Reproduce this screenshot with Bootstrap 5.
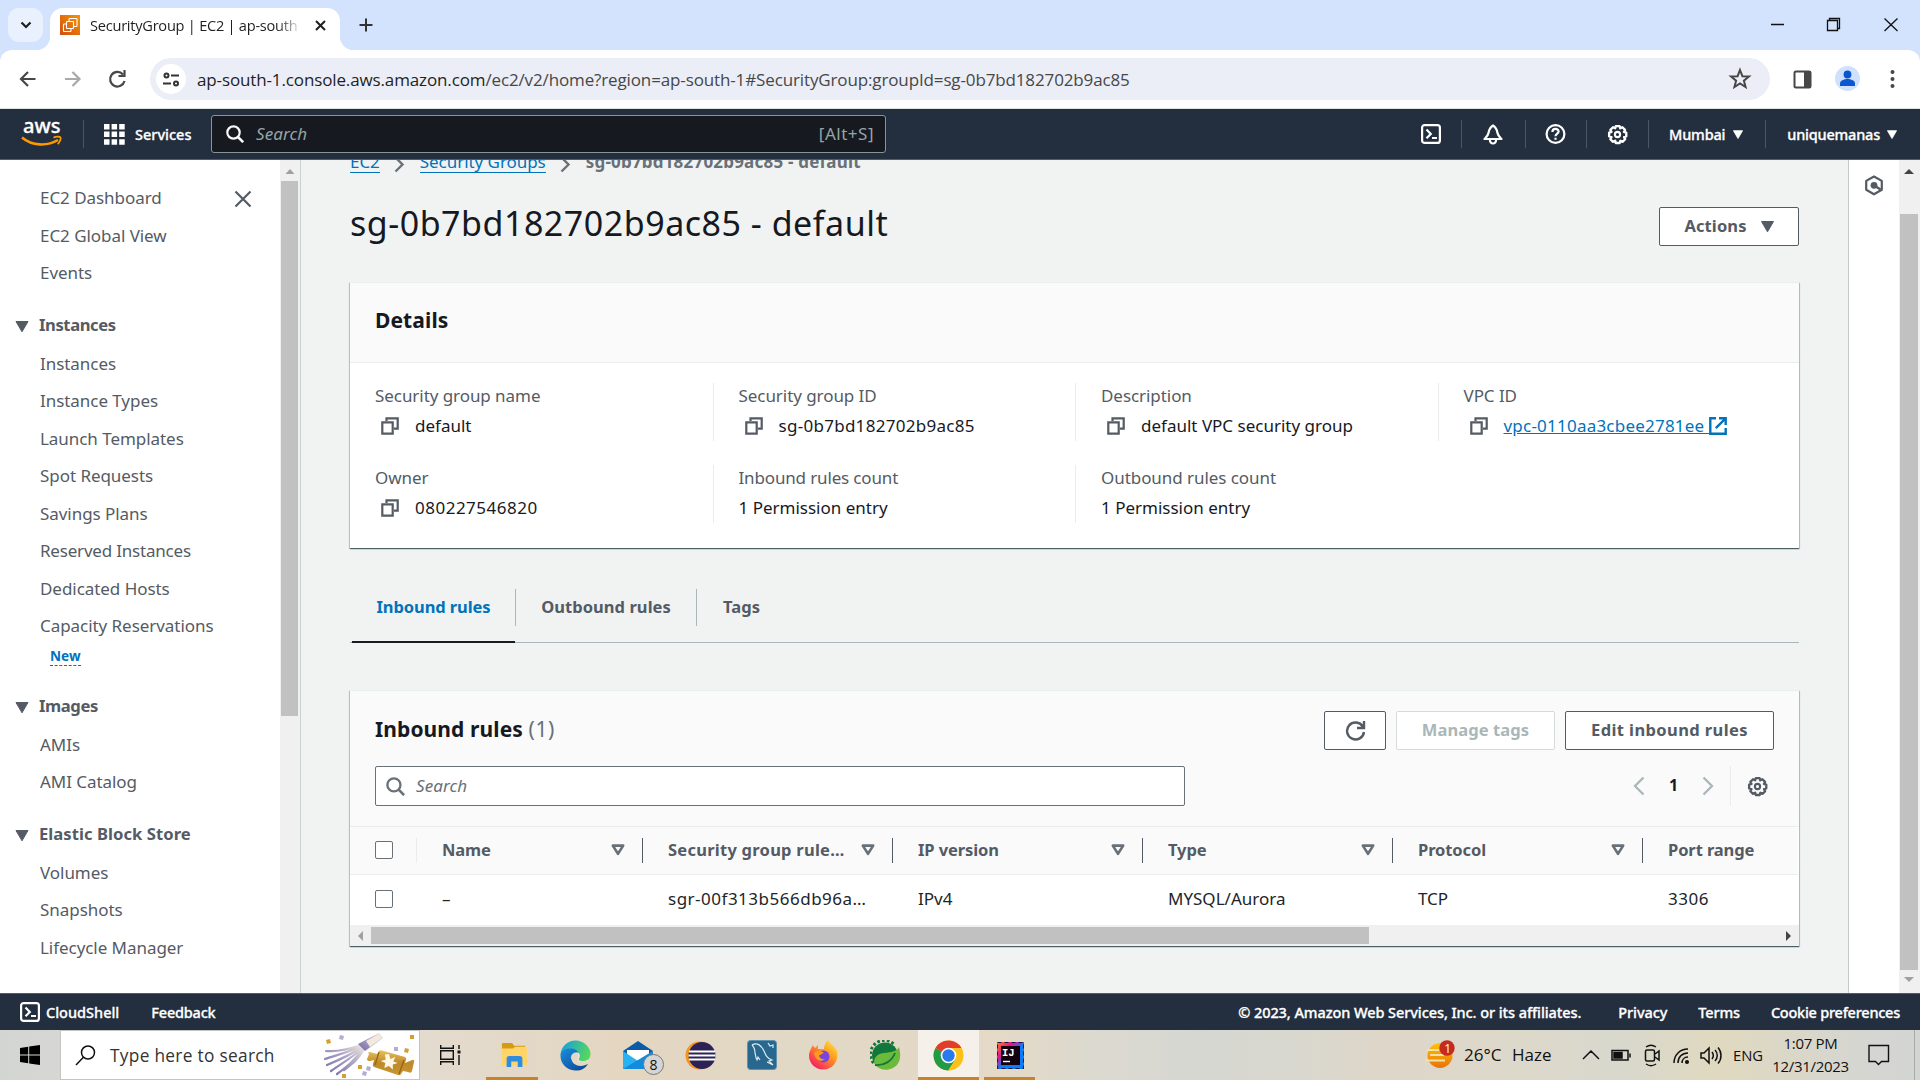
<!DOCTYPE html>
<html lang="en">
<head>
<meta charset="utf-8">
<title>SecurityGroup | EC2 | ap-south-1</title>
<meta name="viewport" content="width=device-width, initial-scale=1">
<link href="https://cdn.jsdelivr.net/npm/bootstrap@5.3.0/dist/css/bootstrap.min.css" rel="stylesheet">
<style>
  :root { --ink:#16191f; --muted:#545b64; --link:#0073bb; --squid:#232f3e; --line:#eaeded; }
  body { font-family:"Noto Sans","Open Sans",sans-serif; font-size:17px; line-height:24px; color:var(--ink); height:1080px; overflow:hidden; background:#f1f3f3; }
  svg { display:block; flex:none; }
  .sys { font-family:"Open Sans","Noto Sans",sans-serif; }
  .wide { letter-spacing:.28px; }
  .wider { letter-spacing:.5px; }

  /* browser chrome */
  .tabstrip { height:50px; background:#d3e3fd; }
  .tab-search { width:35px; height:34px; border-radius:11px; background:#e9f1fe; margin:8px 7px 8px 8px; }
  .page-tab { width:290px; height:42px; margin-top:8px; background:#fff; border-radius:13px 13px 0 0; padding:0 14px 8px 10px; position:relative; }
  .page-tab::before, .page-tab::after { content:""; position:absolute; bottom:0; width:14px; height:14px; }
  .page-tab::before { left:-14px; background:radial-gradient(circle at 0 0, transparent 14px, #fff 14.5px); }
  .page-tab::after { right:-14px; background:radial-gradient(circle at 100% 0, transparent 14px, #fff 14.5px); }
  .tab-title { font-size:14.6px; letter-spacing:-.25px; width:208px; margin-left:10px; color:#1f1f1f; -webkit-mask-image:linear-gradient(90deg,#000 90%,transparent 102%); mask-image:linear-gradient(90deg,#000 90%,transparent 102%); }
  .toolbar-wrap { background:#d3e3fd; }
  .toolbar { height:59px; background:#fff; border-radius:12px 12px 0 0; border-bottom:1px solid #dce3e0; }
  .omnibox { width:1620px; height:42px; border-radius:21px; background:#ebeef7; }
  .site-chip { width:30px; height:30px; border-radius:50%; background:#fff; margin:0 11px 0 -2px; }
  .url-text { font-size:17px; color:#474747; letter-spacing:-.13px; padding-top:2px; }
  .url-text b { font-weight:400; color:#1f1f1f; }

  /* console header */
  .console-nav { height:51px; background:var(--squid); border-bottom:1px solid #545b64; color:#fff; font-size:15px; padding:0; }
  .vrule { width:1px; height:28px; background:#4b5663; }
  .nav-search { width:675px; height:38px; background:#16191f; border:1px solid #879596; border-radius:3px; color:#95a5a6; font-size:17px; }
  .semi { font-weight:500; -webkit-text-stroke:.3px currentColor; }

  /* page body */
  .console-body { height:833px; overflow:hidden; }
  .side { width:280px; background:#fff; padding:19px 0 0 40px; color:var(--muted); overflow:hidden; }
  .side .nav-link { height:37.5px; line-height:38px; padding:0; color:var(--muted); white-space:nowrap; letter-spacing:-.05px; }
  .side-head { height:53px; padding-top:14px; margin-left:-25px; font-weight:700; font-size:16.6px; letter-spacing:-.4px; }
  .side-head svg { margin:2px 10px 0 0; }
  .new-flag { height:28px; padding-left:10px; line-height:19px; }
  .new-flag span { display:inline-block; color:var(--link); font-weight:700; font-size:13.6px; border-bottom:1px dashed var(--link); }
  .vbar { width:21px; background:#f0f0f0; border-right:1px solid #ccd1d1; padding:0 2px 0 1px; }
  .vthumb { background:#c1c1c1; }
  .main-pane { width:1548px; padding:0 49px; overflow:hidden; border-right:1px solid #c5cbcb; }
  .trail { height:23px; margin-top:-10px; font-size:17px; line-height:23px; letter-spacing:-.05px; }
  .trail a { color:var(--link); text-decoration:none; border-bottom:1px solid var(--link); line-height:21px; }
  .trail svg { margin:6px 15px 0 14px; }
  .page-title { font-size:34px; line-height:42px; font-weight:400; margin:-1px 0 0; letter-spacing:.52px; }
  .btn-aws { --bs-btn-bg:#fff; --bs-btn-border-color:#545b64; --bs-btn-color:#545b64; --bs-btn-font-weight:700; --bs-btn-border-radius:2px; --bs-btn-disabled-bg:#fff; --bs-btn-disabled-color:#aab7b8; --bs-btn-disabled-border-color:#d5dbdb; --bs-btn-disabled-opacity:1; height:39px; padding:0; font-size:16.5px; letter-spacing:.1px; display:inline-flex; align-items:center; justify-content:center; }
  .panel { border:0; border-radius:0; box-shadow:0 1px 1px 0 rgba(0,28,36,.55),1px 1px 1px 0 rgba(0,28,36,.18),-1px 1px 1px 0 rgba(0,28,36,.15); border-top:1px solid var(--line); }
  .panel .card-header { background:#fafafa; border-bottom:1px solid var(--line); border-radius:0; padding:0 25px; }
  .panel-title { font-size:21px; font-weight:700; letter-spacing:.1px; margin:0; line-height:30px; }
  .fact { width:362.5px; height:58px; border-left:1px solid var(--line); padding-left:25px; }
  .fact:first-child { border-left:0; width:362.5px; }
  .fact-label { color:var(--muted); line-height:25px; letter-spacing:-.06px; }
  .fact-value { line-height:24px; margin-top:6px; }
  .copy-ico { color:var(--muted); margin:0 16px 0 6px; }
  .fact a { color:var(--link); }
  .rule-tabs { border-bottom:1px solid #aab7b8; height:62px; margin-top:33px; }
  .rule-tabs .nav-link { border:0; border-radius:0; color:var(--muted); font-weight:700; font-size:16.5px; letter-spacing:.05px; padding:0; height:61px; line-height:51px; background:none; }
  .rule-tabs .nav-link.active { color:var(--link); border-bottom:2px solid #16191f; background:none; height:62px; letter-spacing:-.1px; }
  .tab-rule { width:1px; height:37px; background:#aab7b8; margin-top:8px; }
  .find-box { width:810px; height:40px; background:#fff; border:1px solid #687078; border-radius:2px; color:#687078; }
  .grid-table { table-layout:fixed; width:1448px; margin:0; }
  .grid-table th, .grid-table td { padding:0; border-bottom:1px solid var(--line); vertical-align:middle; }
  .grid-table th { background:#fafafa; color:var(--muted); font-size:16.5px; letter-spacing:-.1px; height:48px; }
  .grid-table td { height:50px; border-bottom:0; padding-bottom:1px; }
  .cell { height:25px; padding:0 17px 0 25px; border-right:1px solid #545b64; display:flex; justify-content:space-between; align-items:center; white-space:nowrap; }
  .form-check-input[type=checkbox].check { width:18px; height:18px; border:1px solid #687078; border-radius:2px; background:#fff; margin:0 0 0 25px; display:block; float:none; }
  .hbar { height:22px; background:#f0f0f0; }
  .hthumb { width:998px; height:17px; background:#c1c1c1; }
  .aside-rail { width:50px; background:#fff; color:var(--muted); padding:15px 0 0 15px; }

  .console-foot { height:37px; background:var(--squid); border-top:1px solid #545b64; color:#fff; font-size:14.5px; }

  /* desktop taskbar */
  .taskbar { height:50px; background:linear-gradient(90deg,#d3d5d3 0,#dcdcd4 200px,#e3dbcf 420px,#e4d6c1 620px,#e1d8c5 800px,#e5d9c7 1000px,#dcd9cf 1090px,#d6d7d2 1200px,#d9d8cf 1290px,#ded6c9 1380px,#ddd8ca 1500px,#d9d8cd 1620px,#e0d9bf 1720px,#d6d6d0 1850px,#d3d5d4 1920px); color:#111; }
  .start-cell { width:60px; }
  .desk-find { width:360px; height:50px; background:#fff; border:1px solid #c4c4c2; }
  .task { width:62px; height:50px; position:relative; display:flex; align-items:center; justify-content:center; }
  .task.nudge { padding-left:3px; }
  .task.open::after { content:""; position:absolute; left:5px; right:6px; bottom:0; height:3px; background:#c9822b; }
  .task.current { background:#f5f0e9; }
  .task.current::after { left:0; right:0; }
  .mail-count { position:absolute; left:39px; top:24px; width:21px; height:21px; border-radius:50%; border:1px solid #777; background:#d5d5d3; font-size:14px; line-height:19px; text-align:center; }
  .tray { font-size:16px; }
  .clock { font-size:15px; line-height:23.5px; letter-spacing:-.3px; padding-left:1px; }
</style>
<script src="https://cdn.jsdelivr.net/npm/bootstrap@5.3.0/dist/js/bootstrap.bundle.min.js"></script>
</head>
<body class="d-flex flex-column">
<svg width="0" height="0" class="position-absolute">
  <symbol id="copy" viewBox="0 0 18 18"><path d="M5.500 4V1.300h11.200v10.400H13M1.300 5.300h10.400v11.400H1.300z" fill="none" stroke="currentColor" stroke-width="2.200"/></symbol>
  <symbol id="gear" viewBox="0 0 20 20"><path d="M8.300 1.500h3.400l.6 2 1.900-1 2.400 2.400-1 1.800 2.100.7v3.300l-2 .7 1 1.900-2.400 2.300-1.900-1-.7 2.100H8.300l-.6-2.100-1.900 1-2.400-2.300 1-1.900-2.100-.7V7.400l2.100-.7-1-1.800 2.400-2.400 1.900 1z" transform="translate(-.4 .4) scale(1.060)" fill="none" stroke="currentColor" stroke-width="2.100" stroke-linejoin="round"/><circle cx="10" cy="10" r="2.500" fill="none" stroke="currentColor" stroke-width="2"/></symbol>
  <symbol id="lens" viewBox="0 0 18 18"><circle cx="7.500" cy="7.500" r="6.200" fill="none" stroke="currentColor" stroke-width="2.200"/><path d="M12 12l5.200 5.200" stroke="currentColor" stroke-width="2.500"/></symbol>
  <symbol id="shell" viewBox="0 0 20 20"><rect x="1.100" y="1.100" width="17.800" height="17.800" rx="2.500" fill="none" stroke="currentColor" stroke-width="2.200"/><path d="M5.500 5.500l4.300 4.400-4.300 4.400M11 14h5" fill="none" stroke="currentColor" stroke-width="2.200"/></symbol>
  <symbol id="down" viewBox="0 0 13 11"><path d="M.5.500h12L6.500 10.800z" fill="currentColor" stroke="currentColor" stroke-linejoin="round"/></symbol>
  <symbol id="sort" viewBox="0 0 14 12"><path d="M1.800 1.600h10.400L7 9.800z" fill="none" stroke="#687078" stroke-width="2.600" stroke-linejoin="round"/></symbol>
  <symbol id="crumb" viewBox="0 0 11 17"><path d="M1.500 1.500l7 7-7 7" fill="none" stroke="#687078" stroke-width="2.400"/></symbol>
</svg>

<div class="tabstrip d-flex sys">
  <div class="tab-search d-flex align-items-center justify-content-center"><svg width="12" height="8" viewBox="0 0 12 8"><path d="M1.500 1.500L6 6l4.500-4.500" fill="none" stroke="#1f1f1f" stroke-width="2.200"/></svg></div>
  <div class="page-tab d-flex align-items-center">
    <svg width="20" height="20" viewBox="0 0 20 20"><defs><linearGradient id="og" x1="0" y1="1" x2="1" y2="0"><stop stop-color="#cf4f14"/><stop offset="1" stop-color="#f79400"/></linearGradient></defs><path d="M0 0h20v20H0z" fill="url(#og)"/><g fill="none" stroke="#fff" stroke-width="1.100"><rect x="6.500" y="6.500" width="7" height="7" rx=".8"/><path d="M9 6V4.300q0-.8.800-.8h6.400q.8 0 .8.800v6.400q0 .8-.8.800H14M6 9H4.300q-.8 0-.8.800v5.900q0 .8.800.8h5.900q.8 0 .8-.8V14"/></g></svg>
    <div class="tab-title text-nowrap overflow-hidden">SecurityGroup | EC2 | ap-south-1</div>
    <svg class="ms-auto" width="11" height="11" viewBox="0 0 11 11"><path d="M1 1l9 9M10 1l-9 9" stroke="#1f1f1f" stroke-width="2"/></svg>
  </div>
  <svg class="ms-3" width="20" height="50" viewBox="0 0 20 50"><path d="M10 18.500v13M3.500 25h13" stroke="#333" stroke-width="2"/></svg>
  <div class="ms-auto d-flex" style="margin-right:22px">
    <svg width="127" height="50" viewBox="0 0 127 50" fill="none" stroke="#111" stroke-width="1.300"><path d="M0 24.500h13M56.500 20.500h10v10h-10zM58.500 20.500v-2h10v10h-2M113.500 18.500l13 12.500M126.500 18.500l-13 12.500"/></svg>
  </div>
</div>
<div class="toolbar-wrap sys">
  <div class="toolbar d-flex align-items-center">
    <svg width="150" height="58" viewBox="0 0 150 58" fill="none" stroke="#474747" stroke-width="2.200"><path d="M35.500 29H21M28 22l-7 7 7 7"/><path d="M65 29h14.500M72.500 22l7 7-7 7" stroke="#a9a9a9"/><path d="M123 24.500a7.300 7.300 0 1 0 1.500 6.500M124.500 20v6h-6"/></svg>
    <div class="omnibox d-flex align-items-center px-2">
      <div class="site-chip d-flex align-items-center justify-content-center"><svg width="17" height="15" viewBox="0 0 17 15" fill="none" stroke="#333" stroke-width="2"><circle cx="3.500" cy="3.500" r="2"/><path d="M8 3.500h8M0 11.500h8"/><circle cx="13" cy="11.500" r="2"/></svg></div>
      <div class="url-text"><b>ap-south-1.console.aws.amazon.com</b>/ec2/v2/home?region=ap-south-1#SecurityGroup:groupId=sg-0b7bd182702b9ac85</div>
      <svg class="ms-auto me-2" width="28" height="24" viewBox="0 0 28 24"><path d="M14 3l2.400 6.200 6.600.3-5.100 4.200 1.700 6.300L14 16.400 8.400 20l1.700-6.300L5 9.500l6.600-.3z" fill="none" stroke="#474747" stroke-width="2"/></svg>
    </div>
    <svg width="150" height="58" viewBox="0 0 150 58"><rect x="24.500" y="21.500" width="16" height="16" rx="1.500" fill="none" stroke="#474747" stroke-width="2"/><path d="M34 21h7v17h-7z" fill="#474747"/><circle cx="77.500" cy="28.500" r="12.500" fill="#cfe1fd"/><circle cx="77.500" cy="24.500" r="3.900" fill="#0b57d0"/><path d="M70 36v-2.500c0-3 4-4.500 7.500-4.500s7.500 1.500 7.500 4.500V36z" fill="#0b57d0"/><g fill="#474747"><circle cx="122.500" cy="22" r="2"/><circle cx="122.500" cy="29" r="2"/><circle cx="122.500" cy="36" r="2"/></g></svg>
  </div>
</div>

<nav class="navbar console-nav flex-nowrap justify-content-start">
  <svg width="83" height="50" viewBox="0 0 83 50"><text x="23" y="24" font-family="Noto Sans" font-size="19.500" font-weight="500" fill="#fff" stroke="#fff" stroke-width=".3" textLength="37.500" lengthAdjust="spacingAndGlyphs">aws</text><path d="M22 28.500c10 8.500 25 9 36 2.500" fill="none" stroke="#f90" stroke-width="2.600"/><path d="M53.500 28.600c3-1.300 6.300-1 7-.2.600 1-.3 4.500-2.800 6.800" fill="none" stroke="#f90" stroke-width="1.700"/></svg>
  <div class="vrule"></div>
  <svg style="margin-left:20px" width="21" height="21" viewBox="0 0 21 21" fill="#fff"><path d="M0 0h5.500v5.500H0zM7.600 0h5.500v5.500H7.600zM15.200 0h5.500v5.500h-5.500zM0 7.600h5.500v5.500H0zM7.600 7.600h5.500v5.500H7.600zM15.200 7.600h5.500v5.500h-5.500zM0 15.200h5.500v5.500H0zM7.600 15.200h5.500v5.500H7.600zM15.200 15.200h5.500v5.500h-5.500z"/></svg>
  <div class="semi" style="width:86px;padding-left:10px;font-size:14.500px">Services</div>
  <div class="nav-search d-flex align-items-center" style="padding:0 11px 0 14px"><svg class="text-light" width="18" height="18"><use href="#lens"/></svg><span class="fst-italic" style="margin-left:12px;letter-spacing:.1px">Search</span><span class="ms-auto wider">[Alt+S]</span></div>
  <div class="ms-auto d-flex align-items-center text-nowrap semi" style="font-size:14.500px;letter-spacing:-.2px">
    <svg width="20" height="20"><use href="#shell"/></svg><div class="vrule" style="margin:0 21px 0 20px"></div>
    <svg width="20" height="21" viewBox="0 0 20 21" fill="none" stroke="#fff" stroke-width="2.200"><path d="M10 1.500c-3.200 2-4 4-4.500 7.500-.4 2.500-1.500 3.500-4 6h17c-2.500-2.500-3.600-3.500-4-6-.5-3.500-1.300-5.500-4.500-7.500zM6.800 15.500c.2 2.500 1.500 4 3.200 4s3-1.500 3.200-4" stroke-linejoin="round"/></svg><div class="vrule" style="margin:0 19px 0 22px"></div>
    <svg width="21" height="20" viewBox="0 0 21 20" fill="none" stroke="#fff" stroke-width="2.200"><circle cx="10.500" cy="10" r="8.900"/><path d="M7.400 8c0-4 6.200-4 6.200-.4 0 2-3.100 2.200-3.100 4.700M10.500 13.700v2"/></svg><div class="vrule" style="margin:0 19.500px 0 20px"></div>
    <svg width="21" height="21"><use href="#gear"/></svg><div class="vrule" style="margin:0 20.500px 0 20px"></div>
    <span>Mumbai</span><svg class="ms-2" width="10" height="9"><use href="#down"/></svg><div class="vrule" style="margin:0 21px 0 22px"></div>
    <span>uniquemanas</span><svg style="margin:0 23px 0 7px" width="10" height="9"><use href="#down"/></svg>
  </div>
</nav>

<div class="console-body d-flex">
  <aside class="side">
    <nav class="nav flex-column flex-nowrap">
      <div class="d-flex justify-content-between align-items-center"><a class="nav-link">EC2 Dashboard</a><svg style="margin:2px 28px 0 0" width="18" height="18" viewBox="0 0 18 18"><path d="M1.500 1.500l15 15M16.500 1.500l-15 15" stroke="#545b64" stroke-width="2.200"/></svg></div>
      <a class="nav-link">EC2 Global View</a>
      <a class="nav-link">Events</a>
      <div class="side-head d-flex align-items-center"><svg width="14" height="11"><use href="#down"/></svg>Instances</div>
      <a class="nav-link">Instances</a>
      <a class="nav-link">Instance Types</a>
      <a class="nav-link">Launch Templates</a>
      <a class="nav-link">Spot Requests</a>
      <a class="nav-link">Savings Plans</a>
      <a class="nav-link" style="letter-spacing:-.2px">Reserved Instances</a>
      <a class="nav-link">Dedicated Hosts</a>
      <a class="nav-link">Capacity Reservations</a>
      <div class="new-flag"><span>New</span></div>
      <div class="side-head d-flex align-items-center"><svg width="14" height="11"><use href="#down"/></svg>Images</div>
      <a class="nav-link">AMIs</a>
      <a class="nav-link">AMI Catalog</a>
      <div class="side-head d-flex align-items-center" style="letter-spacing:.05px"><svg width="14" height="11"><use href="#down"/></svg>Elastic Block Store</div>
      <a class="nav-link">Volumes</a>
      <a class="nav-link">Snapshots</a>
      <a class="nav-link">Lifecycle Manager</a>
      <div class="side-head d-flex align-items-center"><svg width="14" height="11"><use href="#down"/></svg>Network &amp; Security</div>
    </nav>
  </aside>
  <div class="vbar"><svg width="18" height="21" viewBox="0 0 18 21"><path d="M9 9l4.500 5h-9z" fill="#a0a0a0"/></svg><div class="vthumb" style="height:535px"></div></div>

  <main class="main-pane">
    <div class="trail d-flex align-items-center">
      <a href="#">EC2</a><svg width="11" height="17"><use href="#crumb"/></svg>
      <a href="#">Security Groups</a><svg width="11" height="17"><use href="#crumb"/></svg>
      <span class="fw-bold" style="color:#687078;letter-spacing:.2px">sg-0b7bd182702b9ac85 - default</span>
    </div>
    <div class="d-flex justify-content-between align-items-start" style="margin-top:30px">
      <h1 class="page-title">sg-0b7bd182702b9ac85 - default</h1>
      <button class="btn btn-aws" style="width:140px;margin-top:4px">Actions<svg style="margin-left:14px" width="13" height="11"><use href="#down"/></svg></button>
    </div>

    <section class="card panel" style="height:266px;margin-top:36px">
      <div class="card-header d-flex align-items-center" style="height:80px;padding-bottom:6px"><h2 class="panel-title">Details</h2></div>
      <div class="card-body p-0" style="padding-top:20px!important">
        <div class="d-flex">
          <div class="fact"><div class="fact-label">Security group name</div><div class="fact-value d-flex align-items-center"><svg class="copy-ico" width="18" height="18"><use href="#copy"/></svg>default</div></div>
          <div class="fact"><div class="fact-label">Security group ID</div><div class="fact-value d-flex align-items-center wide"><svg class="copy-ico" width="18" height="18"><use href="#copy"/></svg>sg-0b7bd182702b9ac85</div></div>
          <div class="fact"><div class="fact-label">Description</div><div class="fact-value d-flex align-items-center"><svg class="copy-ico" width="18" height="18"><use href="#copy"/></svg>default VPC security group</div></div>
          <div class="fact" style="width:360px"><div class="fact-label">VPC ID</div><div class="fact-value d-flex align-items-center" style="letter-spacing:.22px"><svg class="copy-ico" width="18" height="18"><use href="#copy"/></svg><a href="#" class="d-flex align-items-center"><span style="white-space:pre">vpc-0110aa3cbee2781ee </span><svg width="18" height="18" viewBox="0 0 18 18" fill="none" stroke="currentColor" stroke-width="2.400"><path d="M7 1.300H1.300v15.400h15.400V11M10 1.300h6.700V8M16.500 1.500l-9.700 9.700"/></svg></a></div></div>
        </div>
        <div class="d-flex" style="margin-top:24px">
          <div class="fact"><div class="fact-label">Owner</div><div class="fact-value d-flex align-items-center wider"><svg class="copy-ico" width="18" height="18"><use href="#copy"/></svg>080227546820</div></div>
          <div class="fact"><div class="fact-label" style="letter-spacing:-.15px">Inbound rules count</div><div class="fact-value">1 Permission entry</div></div>
          <div class="fact"><div class="fact-label">Outbound rules count</div><div class="fact-value">1 Permission entry</div></div>
        </div>
      </div>
    </section>

    <ul class="nav nav-tabs rule-tabs flex-nowrap">
      <li class="nav-item" style="padding-left:2px"><a class="nav-link active text-center" style="width:163px">Inbound rules</a></li>
      <li class="tab-rule"></li>
      <li class="nav-item"><a class="nav-link text-center" style="width:180px">Outbound rules</a></li>
      <li class="tab-rule"></li>
      <li class="nav-item"><a class="nav-link" style="padding-left:26px">Tags</a></li>
    </ul>

    <section class="card panel" style="height:256px;margin-top:47px">
      <div class="card-header" style="height:136px;padding-top:20px">
        <div class="d-flex align-items-center">
          <h2 class="panel-title me-auto" style="padding-bottom:4px">Inbound rules <span class="fw-normal" style="color:#687078;letter-spacing:.6px">(1)</span></h2>
          <button class="btn btn-aws" style="width:62px"><svg width="21" height="21" viewBox="0 0 21 21" fill="none" stroke="currentColor" stroke-width="2.400"><path d="M17.800 6.500A8.500 8.500 0 1 0 19 12M19 1v7h-7"/></svg></button>
          <button class="btn btn-aws" disabled style="width:159px;margin:0 10px">Manage tags</button>
          <button class="btn btn-aws" style="width:209px;letter-spacing:.4px">Edit inbound rules</button>
        </div>
        <div class="d-flex align-items-center" style="margin-top:16px">
          <div class="find-box d-flex align-items-center" style="padding-left:10px"><svg width="19" height="19"><use href="#lens"/></svg><span class="fst-italic" style="margin-left:11px;letter-spacing:.1px">Search</span></div>
          <svg class="ms-auto" width="12" height="20" viewBox="0 0 12 20"><path d="M10.500 1.500L2 10l8.500 8.500" fill="none" stroke="#aab7b8" stroke-width="2.300"/></svg>
          <span class="fw-bold text-center" style="width:57px;font-size:16px;padding-bottom:2px">1</span>
          <svg width="12" height="20" viewBox="0 0 12 20"><path d="M1.500 1.500L10 10l-8.500 8.500" fill="none" stroke="#aab7b8" stroke-width="2.300"/></svg>
          <div style="width:1px;height:40px;background:#eaeded;margin:0 16px"></div>
          <svg style="color:#545b64;margin-right:6px" width="21" height="21"><use href="#gear"/></svg>
        </div>
      </div>
      <div class="overflow-hidden">
        <table class="table grid-table">
          <colgroup><col style="width:67px"><col style="width:226px"><col style="width:250px"><col style="width:250px"><col style="width:250px"><col style="width:250px"><col></colgroup>
          <thead><tr>
            <th><div class="cell p-0" style="border-color:#eaeded"><input type="checkbox" class="form-check-input check"></div></th>
            <th><div class="cell">Name<svg width="14" height="12"><use href="#sort"/></svg></div></th>
            <th><div class="cell" style="letter-spacing:.25px">Security group rule…<svg width="14" height="12"><use href="#sort"/></svg></div></th>
            <th><div class="cell">IP version<svg width="14" height="12"><use href="#sort"/></svg></div></th>
            <th><div class="cell">Type<svg width="14" height="12"><use href="#sort"/></svg></div></th>
            <th><div class="cell">Protocol<svg width="14" height="12"><use href="#sort"/></svg></div></th>
            <th><div class="cell border-0">Port range</div></th>
          </tr></thead>
          <tbody><tr>
            <td><input type="checkbox" class="form-check-input check"></td>
            <td><div class="cell border-0">–</div></td><td><div class="cell border-0 wider">sgr-00f313b566db96a…</div></td><td><div class="cell border-0">IPv4</div></td><td><div class="cell border-0">MYSQL/Aurora</div></td><td><div class="cell border-0">TCP</div></td><td><div class="cell border-0 wider">3306</div></td>
          </tr></tbody>
        </table>
        <div class="hbar d-flex align-items-center"><svg width="21" height="20" viewBox="0 0 21 20"><path d="M8 10l5-5v10z" fill="#a0a0a0"/></svg><div class="hthumb"></div><svg class="ms-auto" width="21" height="20" viewBox="0 0 21 20"><path d="M13 10L8 5v10z" fill="#444"/></svg></div>
      </div>
    </section>
  </main>

  <div class="aside-rail"><svg width="20" height="21" viewBox="0 0 20 21"><path d="M10 1.500l7.800 4.400v8.900L10 19.300l-7.800-4.500V5.900z" fill="none" stroke="currentColor" stroke-width="2.200" stroke-linejoin="round"/><circle cx="10" cy="10.300" r="3.400" fill="currentColor"/><path d="M11 11l5.500 3.500" stroke="currentColor" stroke-width="2.400"/></svg></div>
  <div class="vbar border-0 flex-grow-1 d-flex flex-column"><svg width="18" height="54" viewBox="0 0 18 54"><path d="M9 9l5 5H4z" fill="#444"/></svg><div class="vthumb" style="height:756px"></div><svg class="mt-1" width="18" height="14" viewBox="0 0 18 14"><path d="M9 8L4 3h10z" fill="#a0a0a0"/></svg></div>
</div>

<footer class="console-foot d-flex align-items-center semi text-nowrap">
  <svg style="margin:0 6px 0 20px" width="20" height="20"><use href="#shell"/></svg><span>CloudShell</span><span style="margin-left:32px;letter-spacing:-.2px">Feedback</span>
  <span class="ms-auto" style="letter-spacing:-.08px">© 2023, Amazon Web Services, Inc. or its affiliates.</span><span style="margin-left:37px;letter-spacing:-.1px">Privacy</span><span style="margin-left:31px;letter-spacing:-.15px">Terms</span><span style="margin:0 20px 0 31px;letter-spacing:-.24px">Cookie preferences</span>
</footer>

<div class="taskbar sys d-flex">
  <div class="start-cell d-flex align-items-center ps-1"><svg style="margin-left:16px" width="20" height="20" viewBox="0 0 20 20"><path d="M0 2.900l8.200-1.200v7.800H0zM9.200 1.500L20 0v9.500H9.200zM0 10.500h8.200v7.800L0 17.100zM9.200 10.500H20V20L9.200 18.500z"/></svg></div>
  <div class="desk-find d-flex align-items-center" style="padding-left:14px">
    <svg width="21" height="21" viewBox="0 0 21 21" fill="none" stroke="#111" stroke-width="1.500"><circle cx="13" cy="7.500" r="6.500"/><path d="M8.400 12.200L1 20"/></svg>
    <span style="font-size:17.300px;margin-left:14px;color:#333;letter-spacing:.3px;padding-top:1px">Type here to search</span>
    <svg class="ms-auto me-1" width="92" height="46" viewBox="0 0 92 46"><defs><linearGradient id="lil" x1="0" y1="1" x2="1" y2="0"><stop stop-color="#7467a4"/><stop offset=".55" stop-color="#aaa2c6"/><stop offset="1" stop-color="#f4ebdd"/></linearGradient><linearGradient id="gold" x2="0" y2="1"><stop stop-color="#e8c35b"/><stop offset=".5" stop-color="#bd892b"/><stop offset="1" stop-color="#c9962f"/></linearGradient></defs>
      <g fill="none" stroke="url(#lil)" stroke-width="2.200" stroke-linecap="round"><path d="M38 13C24 18 14 20 3 19M39 14C26 20 14 23 2 27M39 15C28 23 16 28 4 33M40 16C30 25 19 31 8 39M40 16C32 28 25 34 14 42M41 17C35 28 29 32 21 38"/></g>
      <path d="M35 12L56 1l4 5-18 13z" fill="url(#lil)"/><path d="M43 9l13-7 3 4-12 9z" fill="#f3eadb"/>
      <path d="M46 22q-2-2 1-2l7 2 2-3q1-1 3-.5l23 6.500q2 1 1 3l-1 3 7-3q3-1 2 2l-2 9q-1 3-4 1l-5-1-2 3q-1 2-3 1l-24-8q-2-1-1-3l1-4-4 1q-3 0-3-2z" fill="url(#gold)"/><path d="M81 28l-5 14M56 20l-4 13" stroke="#966319" stroke-width="1.300"/>
      <path d="M66 22l1.300 5 5-2-2 4.500 4.500 1.500-5 1.500v5l-4-3.500-4.500 2 1-5-4.500-2 5-1.500-1-5z" fill="#fff7e6"/>
      <g fill="#d5a032"><path d="M3 8l4-1 1 4-4 1zM87 3l4 0 0 4-4 0zM82 16l4 1-1 4-4-1zM35 33l4 0 0 4-4 0zM19 42l4 0 0 4-4 0z"/></g><g fill="#b5add0"><path d="M17 3l4 1-1 4-4-1zM71 15l4 0 0 4-4 0zM44 34l4 1-1 4-4-1zM40 39l4 1-1 4-4-1z"/></g></svg>
  </div>
  <div class="task" style="width:61px"><svg width="21" height="20" viewBox="0 0 21 20" fill="none" stroke="#111" stroke-width="1.400"><path d="M.7 0v3.300h12.600V0M.7 5.700h12.600v8.600H.7zM.7 20v-3.300h12.600V20M19 0v4M19 10v10"/><path d="M17.500 5.500h3v3h-3z" fill="#111" stroke="none"/></svg></div>
  <div class="task open nudge" style="width:63px"><svg width="27" height="26" viewBox="0 0 29 28"><path d="M1 2q0-1 1-1h10l2 3h12v7H1z" fill="#d69a13"/><path d="M1 7h12l2-2h12q1 0 1 1v19H1z" fill="#ffd469"/><path d="M6 27v-9q0-3 3-3h11q3 0 3 3v9h-5v-6h-7v6z" fill="#2f8de0"/></svg></div>
  <div class="task nudge" style="width:60px"><svg width="31" height="31" viewBox="0 0 31 31"><defs><linearGradient id="ed" y1=".2" y2=".5" x2="1"><stop stop-color="#159ee0"/><stop offset="1" stop-color="#57d85c"/></linearGradient><linearGradient id="ed2" x2="1" y2="1"><stop stop-color="#1b8fde"/><stop offset="1" stop-color="#0b3f91"/></linearGradient></defs><path d="M.5 15C1 6 8 .5 15.500.5 24 .5 30.500 7 30.500 14c0 5-3.500 7.500-7.500 7.500-3 0-5-1.500-4-3 2.500-4-1-8-6-8C7 10.500 2 13 .5 15z" fill="url(#ed)"/><path d="M.5 15C1.500 10 6 8.500 10.500 8.500c4 0 7 2 8 4.500-5-1-8 2-7 6.500 1 5 7 8 14 5.500l2.500-1C25 29 20 31 15 30.500 6 30 0 23 .5 15z" fill="url(#ed2)"/><path d="M11.500 19c-1-4 2-7 6-6.200 2 2 2 4 .8 6-.6 1.600 1.700 2.700 4.200 2.700 2 0 4-.5 5.500-1.500" fill="none" stroke="#fff" stroke-opacity=".6" stroke-width=".8"/></svg></div>
  <div class="task nudge" style="width:64px"><svg width="30" height="29" viewBox="0 0 30 29"><path d="M0 10L15 0l15 10v18H0z" fill="#0b5ca8"/><path d="M4 9h22v12H4z" fill="#fff"/><path d="M0 10l15 10L30 10v18H0z" fill="#2ab1f2"/><path d="M0 28l30-18v18z" fill="#128bdc"/></svg><span class="mail-count">8</span></div>
  <div class="task nudge" style="width:61px"><svg width="31" height="29" viewBox="0 0 31 29"><circle cx="14.500" cy="14.500" r="14" fill="#f7941e"/><circle cx="17" cy="14.500" r="13.500" fill="#2c2255"/><path d="M4 10.500h26M3.500 14.500h27M4 18.500h26" stroke="#fff" stroke-width="1.800"/></svg></div>
  <div class="task nudge" style="width:62px"><svg width="30" height="30" viewBox="0 0 30 30"><rect x=".5" y=".5" width="29" height="29" rx="3" fill="#28688e" stroke="#5d91ae"/><path d="M5 5c5-3 9 0 12 6 2 5 3 7 8 9l-3 1 4 4-6-3M5 5c2 2 3 5 3 8 1 2 0 4 2 7l1-3 2 3M21 3l2 3 3-1v3" fill="none" stroke="#dbeaf2" stroke-width="1.200"/></svg></div>
  <div class="task nudge" style="width:62px"><svg width="29" height="30" viewBox="0 0 29 30"><defs><linearGradient id="ff" x1="1" x2=".2" y2="1"><stop stop-color="#fff04a"/><stop offset=".45" stop-color="#ff9a1f"/><stop offset="1" stop-color="#f5136b"/></linearGradient></defs><path d="M19 0c1 3 7 6 9 11 2 10-4 18.500-13.500 18.500C6 29.500 0 23 0 16 0 11 3 8 3.500 5l2.500 3 3-3v4h6c0-4 2-7 4-9z" fill="url(#ff)"/><circle cx="14.500" cy="16.500" r="6" fill="#7a45dd"/><path d="M5 13c4-3 8-2 10 0-2 0-2 2-5 2 0 3 3 5 6 4-4 4-10 1-11-6z" fill="#ff9a1f"/></svg></div>
  <div class="task nudge" style="width:65px;padding-left:0"><svg width="31" height="31" viewBox="0 0 31 31"><circle cx="15" cy="15.500" r="13" fill="#11773c"/><path d="M3.500 23A13.800 13.800 0 0 1 25 5.500" fill="none" stroke="#11773c" stroke-width="3" stroke-dasharray="2.600 2.200"/><path d="M29 7c3 11 0 18-6 21-6 3-13 2-17-2-5-6 1-13 8-13 7-1 12-1 15-6z" fill="#6cba3c"/><path d="M5 25c9 1 17-4 20-12" fill="none" stroke="#11773c" stroke-width="1.800"/></svg></div>
  <div class="task open current" style="width:61px"><svg width="31" height="31" viewBox="0 0 31 31"><circle cx="15.500" cy="15.500" r="15" fill="#fbc116"/><path d="M15.500 15.500L2.500 8A15 15 0 0 1 28.500 8z" fill="#e33b2e"/><path d="M15.500 15.500L2.500 8a15 15 0 0 0 12.800 22.500l7-11z" fill="#229a48"/><path d="M15.500 15.500h14.600A15 15 0 0 1 15.300 30.500l7-11z" fill="#fbc116"/><path d="M15.500 8h13a15 15 0 0 1 1.600 7.500H22z" fill="#fbc116"/><circle cx="15.500" cy="15.500" r="7.800" fill="#fff"/><circle cx="15.500" cy="15.500" r="6.200" fill="#2a79ee"/></svg></div>
  <div class="task open"><svg width="27" height="27" viewBox="0 0 27 27"><defs><linearGradient id="ij" x2="1" y2="1"><stop stop-color="#fc801d"/><stop offset=".3" stop-color="#e5168c"/><stop offset=".55" stop-color="#087cfa"/><stop offset="1" stop-color="#087cfa"/></linearGradient></defs><path d="M0 0h27v27H0z" fill="url(#ij)"/><path d="M.5.500h26v26H.5z" fill="none" stroke="#26153e" stroke-dasharray="4 3"/><path d="M4 4h19v19H4z" fill="#12000e"/><text x="5" y="14" font-family="Liberation Mono" font-weight="700" font-size="10.500" fill="#fff">IJ</text><path d="M6 19.500h7" stroke="#fff" stroke-width="1.400"/></svg></div>

  <div class="tray ms-auto d-flex align-items-center text-nowrap">
    <svg width="30" height="30" viewBox="0 0 30 30"><defs><linearGradient id="sun" x2="0" y2="1"><stop stop-color="#ffc400"/><stop offset="1" stop-color="#e8720c"/></linearGradient></defs><circle cx="15" cy="15.500" r="12.500" fill="url(#sun)"/><path d="M2 10h12M5 15h14M0 20.500h20" stroke="#f3dfa8" stroke-width="2"/><circle cx="22" cy="8" r="7.700" fill="#c42b1c"/><text x="19.300" y="12.500" font-size="12" fill="#fff" font-family="Open Sans">1</text></svg>
    <span style="margin-left:9px;width:48px;font-size:17px">26°C</span><span style="width:63px;font-size:17px">Haze</span>
    <svg style="margin-right:8px" width="150" height="30" viewBox="0 0 150 30" fill="none" stroke="#111" stroke-width="1.500"><path d="M8 19l8-8 8 8M37 10.500h16v9.500H37zM55 13.500v4"/><path d="M39 12.500h8v5.500h-8z" fill="#111"/><rect x="70.500" y="10" width="9" height="11" rx="1.500"/><path d="M80 14l4-3v9l-4-3M71 7c3-2 7-2 10 0M71 24c3 2 7 2 10 0"/><path d="M99 23c0-8 6-14 14-14M103 23c0-6 4-10 10-10M107 23c0-3 2-6 6-6" /><circle cx="112" cy="22" r="1.300" fill="#111"/><path d="M126 13h3l5-5v15l-5-5h-3zM137 12c1.500 2 1.500 5 0 7M140 10c3 3 3 8 0 11M143 7.500c4 4.500 4 11.500 0 16"/></svg>
    <span style="font-size:14.800px;width:36px">ENG</span>
    <div class="clock text-center" style="width:82px">1:07 PM<br>12/31/2023</div>
    <svg style="margin:0 24px 0 17px" width="22" height="22" viewBox="0 0 22 22"><path d="M1 1.500h19.500v16h-7l-3 3-3-3H1z" fill="none" stroke="#111" stroke-width="1.400"/></svg>
    <div style="width:1px;height:50px;background:#aaa;margin-right:5px"></div>
  </div>
</div>
</body>
</html>
